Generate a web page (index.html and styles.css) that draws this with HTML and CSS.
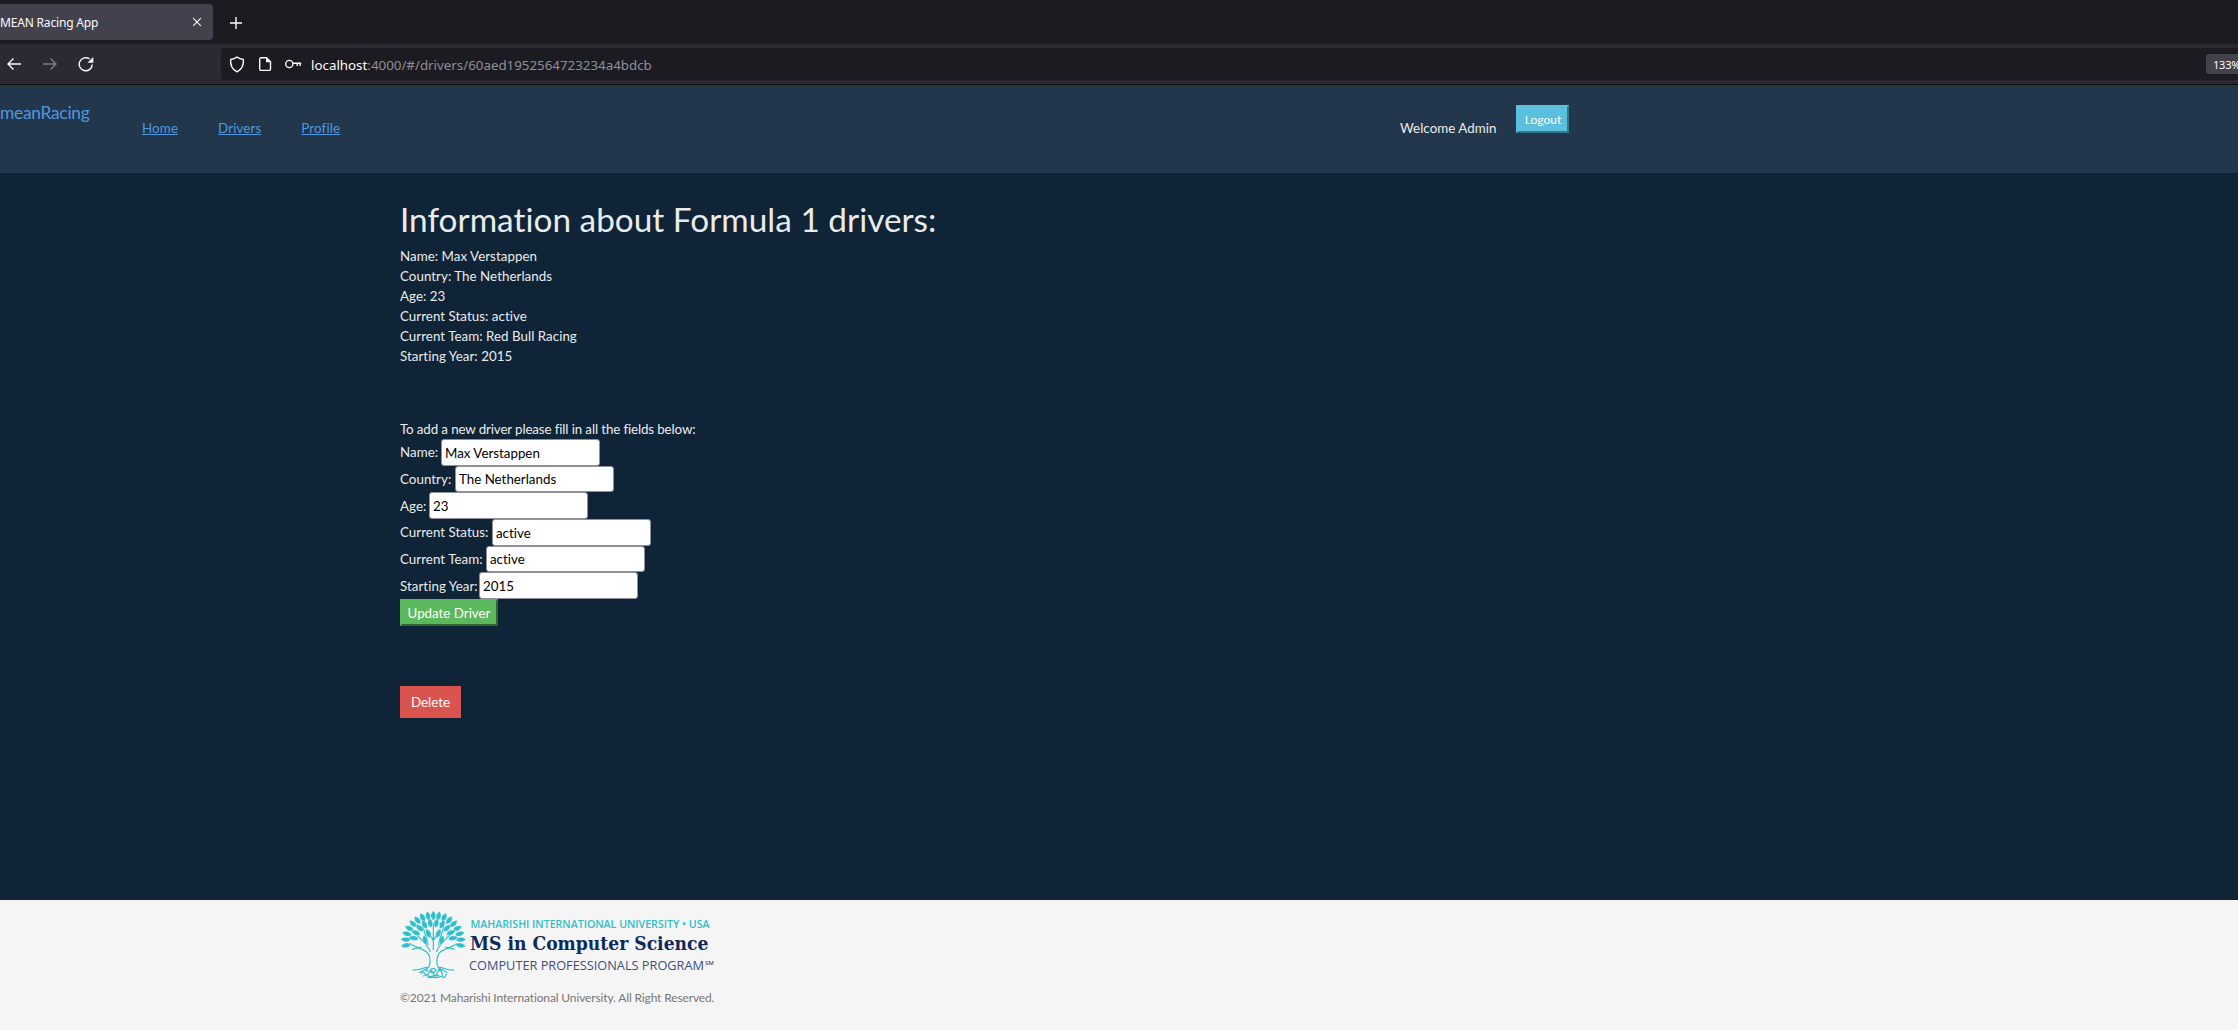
FILE: index.html
```html
<!DOCTYPE html>
<html lang="en">
<head>
<meta charset="utf-8">
<title>MEAN Racing App</title>
<link rel="stylesheet" href="styles.css">
</head>
<body>
<div class="tabs">
  <div class="tab">
    <span class="tab-title">MEAN Racing App</span>
    <svg class="tab-close" width="10" height="10" viewBox="0 0 10 10"><path d="M1.2 1.2l7.6 7.6M8.8 1.2L1.2 8.8"/></svg>
  </div>
  <svg class="tab-new" width="14" height="14" viewBox="0 0 14 14"><path d="M7 1v12M1 7h12"/></svg>
</div>
<div class="toolbar">
  <div class="nav-icons">
    <svg width="16" height="16" viewBox="0 0 16 16"><path d="M15 8H2M7.5 2.5L2 8l5.500 5.500"/></svg>
    <svg class="dim" width="16" height="16" viewBox="0 0 16 16"><path d="M1 8h13M8.500 2.500L14 8l-5.500 5.500"/></svg>
    <svg width="16" height="16" viewBox="0 0 16 16"><path d="M14.200 8.400A6.500 6.500 0 1 1 11.600 3"/><path class="solid" d="M15.300 1v5.800H9.500z"/></svg>
  </div>
  <div class="urlbar">
    <svg width="16" height="17" viewBox="0 0 16 17"><path d="M8 1.200c2 1.300 4 2 6.300 2.300.5 5-1.300 9.800-6.300 12.300C3 13.300 1.200 8.500 1.700 3.500 4 3.200 6 2.500 8 1.200z"/></svg>
    <svg width="14" height="16" viewBox="0 0 14 16"><path d="M8.500 1.800H3a1.300 1.300 0 0 0-1.300 1.300v10A1.300 1.300 0 0 0 3 14.400h8.200a1.300 1.300 0 0 0 1.300-1.300V5.800z"/><path class="solid" d="M8 1l5.200 5.200H8z"/></svg>
    <svg width="18" height="12" viewBox="0 0 18 12"><circle cx="4.300" cy="6" r="3.600"/><path d="M7.900 5.200h8.300M15.100 5.200V8M12.300 5.200V8"/></svg>
    <span class="url"><b>localhost</b>:4000/#/drivers/60aed1952564723234a4bdcb</span>
    <span class="zoom-level">133%</span>
  </div>
</div>
<header class="site-header">
  <a class="brand">meanRacing</a>
  <nav class="menu"><a>Home</a><a>Drivers</a><a>Profile</a></nav>
  <span class="welcome">Welcome Admin</span>
  <button class="logout">Logout</button>
</header>
<main class="content">
  <h1>Information about Formula 1 drivers:</h1>
  <div class="info">
    <div>Name: Max Verstappen</div>
    <div>Country: The Netherlands</div>
    <div>Age: 23</div>
    <div>Current Status: active</div>
    <div>Current Team: Red Bull Racing</div>
    <div>Starting Year: 2015</div>
  </div>
  <form class="driver-form">
    <div class="intro">To add a new driver please fill in all the fields below:</div>
    <label class="name">Name:<input value="Max Verstappen"></label>
    <label class="country">Country:<input value="The Netherlands"></label>
    <label class="age">Age:<input value="23"></label>
    <label class="status">Current Status:<input value="active"></label>
    <label class="team">Current Team:<input value="active"></label>
    <label class="year">Starting Year:<input value="2015"></label>
    <button class="update" type="button">Update Driver</button>
  </form>
  <button class="delete">Delete</button>
</main>
<footer class="site-footer">
  <svg class="logo" width="320" height="70" viewBox="0 0 320 70">
    <defs>
      <path id="leaf" d="M0 2C-10-7-9-17 0-27 9-17 10-7 0 2z"/>
    </defs>
    <g transform="scale(.3333) translate(-60 -57)">
      <g class="branches">
        <path d="M146 232C153 215 150 200 144 190 132 176 108 174 88 160M174 232C168 215 171 200 177 190 189 176 213 174 233 160"/>
        <path d="M160 180V100M160 152l-14-24M160 152l14-24M151 186C145 165 124 150 104 128M169 186C175 165 196 150 216 128M144 165C143 145 131 127 128 106M176 165C177 145 189 127 192 106M125 171L96 178M195 171l29 7"/>
      </g>
      <g class="leaves" transform="translate(160 154) scale(1.070 1)">
        <use href="#leaf" transform="rotate(-99) translate(0 -65)"/><use href="#leaf" transform="rotate(-86) translate(0 -65)"/><use href="#leaf" transform="rotate(-73) translate(0 -65)"/><use href="#leaf" transform="rotate(-60) translate(0 -65)"/><use href="#leaf" transform="rotate(-47) translate(0 -65)"/><use href="#leaf" transform="rotate(-35) translate(0 -65)"/><use href="#leaf" transform="rotate(-23) translate(0 -65)"/><use href="#leaf" transform="rotate(-11) translate(0 -65)"/><use href="#leaf" transform="rotate(0) translate(0 -65)"/><use href="#leaf" transform="rotate(11) translate(0 -65)"/><use href="#leaf" transform="rotate(23) translate(0 -65)"/><use href="#leaf" transform="rotate(35) translate(0 -65)"/><use href="#leaf" transform="rotate(47) translate(0 -65)"/><use href="#leaf" transform="rotate(60) translate(0 -65)"/><use href="#leaf" transform="rotate(73) translate(0 -65)"/><use href="#leaf" transform="rotate(86) translate(0 -65)"/><use href="#leaf" transform="rotate(99) translate(0 -65)"/>
        <use href="#leaf" transform="rotate(-80) translate(0 -44)"/><use href="#leaf" transform="rotate(-62) translate(0 -43)"/><use href="#leaf" transform="rotate(-44) translate(0 -43)"/><use href="#leaf" transform="rotate(-26) translate(0 -44)"/><use href="#leaf" transform="rotate(-9) translate(0 -43)"/><use href="#leaf" transform="rotate(9) translate(0 -43)"/><use href="#leaf" transform="rotate(26) translate(0 -44)"/><use href="#leaf" transform="rotate(44) translate(0 -43)"/><use href="#leaf" transform="rotate(62) translate(0 -43)"/><use href="#leaf" transform="rotate(80) translate(0 -44)"/>
        <use href="#leaf" transform="translate(-21 8) rotate(-12)"/><use href="#leaf" transform="translate(21 8) rotate(12)"/><use href="#leaf" transform="translate(-10 -12) rotate(-20)"/><use href="#leaf" transform="translate(10 -12) rotate(20)"/>
      </g>
      <path class="branches" d="M98 240c18 3 32-9 48-8M222 240c-18 3-32-9-48-8M146 232c-8 8-20 10-28 16M174 232c8 8 20 10 28 16M122 251q6-9 13 0t13-4 12 4 13-4 13 4 13 0M130 259q7-7 14-2t16 0 16 0 14 2M160 236c-7 0-14 6-8 10s16 0 16-4-4-6-8-6M136 243q7-5 8 2M184 243q-7-5-8 2M142 262h36"/>
    </g>
    <text class="university" x="70.500" y="19" textLength="239" lengthAdjust="spacingAndGlyphs">MAHARISHI INTERNATIONAL UNIVERSITY • USA</text>
    <text class="degree" x="70" y="41" textLength="238.500" lengthAdjust="spacingAndGlyphs">MS in Computer Science</text>
    <text class="program" x="69" y="61" textLength="235" lengthAdjust="spacingAndGlyphs">COMPUTER PROFESSIONALS PROGRAM</text>
    <text class="mark" x="305" y="56" textLength="9" lengthAdjust="spacingAndGlyphs">SM</text>
  </svg>
  <p class="copyright">©2021 Maharishi International University. All Right Reserved.</p>
</footer>
</body>
</html>
```
FILE: styles.css
```css
* { box-sizing: border-box; }
body {
  margin: 0;
  height: 1030px;
  overflow: hidden;
  display: flex;
  flex-direction: column;
  background: #0f2437;
  color: #ebebeb;
  font: 13.33px/20px Lato, sans-serif;
  font-variant-ligatures: no-common-ligatures;
}
svg { flex: none; fill: none; stroke: #fbfbfe; stroke-width: 1.4; }
svg .solid { fill: #fbfbfe; stroke: none; }
input, button { font: inherit; border-radius: 0; }

.tabs { height: 44px; flex: none; display: flex; background: #1c1b22; padding-top: 4px; }
.tab {
  width: 213px; height: 36px; display: flex; align-items: center; justify-content: space-between;
  padding-right: 11px; background: #42414d; border-radius: 0 4px 4px 0;
}
.tab-title { font: 12px/18px "Noto Sans", sans-serif; color: #fbfbfe; letter-spacing: -.18px; padding-top: 2px; }
.tab-close { stroke-width: 1.1; margin-top: -1px; }
.tab-new { margin: 12px 0 0 16px; }

.toolbar {
  height: 41px; flex: none; display: flex; align-items: center;
  background: #2b2a33; border-bottom: 1px solid #0c0c0d;
}
.nav-icons { width: 221px; display: flex; gap: 20px; padding-left: 6px; }
.dim { opacity: .4; }
.urlbar {
  flex: 1; height: 32px; display: flex; align-items: center;
  padding-left: 8px; background: #1c1b22; border-radius: 4px 0 0 4px;
}
.urlbar svg { margin-right: 13px; }
.urlbar svg:nth-of-type(3) { margin-right: 8px; }
.url { font: 13.33px/20px "Noto Sans", sans-serif; color: #8f8f96; margin-top: 2px; }
.url b { font-weight: 400; color: #fbfbfe; }
.zoom-level {
  margin-left: auto; width: 32px; height: 20px; padding-left: 7px; white-space: nowrap;
  background: #42414d; border-radius: 3px 0 0 3px; color: #fbfbfe;
  font: 11px/22px "Noto Sans", sans-serif; letter-spacing: -.2px;
}

.site-header { height: 88px; flex: none; display: flex; background: #22374b; }
.brand { width: 142px; padding-top: 17px; font-size: 17.33px; line-height: 22px; letter-spacing: -.25px; color: #4f97e0; }
.menu { display: flex; gap: 40px; width: 1258px; padding-top: 33px; letter-spacing: .13px; }
.menu a { color: #4f97e0; text-decoration: underline; }
.welcome { width: 116px; padding-top: 33px; letter-spacing: .04px; }
.logout {
  width: 53px; height: 28px; margin-top: 20px; padding: 2px 0 0 1px;
  background: #5bc0de; border: 2px outset #5bc0de; color: #fff; font-size: 12px;
}

.content { flex: 1; padding: 28px 0 0 400px; }
h1 { margin: 0 0 9px; font-size: 33.33px; line-height: 36px; font-weight: 400; letter-spacing: .02px; }
.info { letter-spacing: .04px; }
.intro { margin-top: 53px; letter-spacing: -.12px; }
.driver-form { display: flex; flex-direction: column; align-items: flex-start; }
.driver-form label { display: flex; align-items: center; height: 26.67px; letter-spacing: .04px; }
.driver-form input {
  width: 159px; height: 26.67px; margin-left: auto; padding: 1px 3px 0;
  background: #fff; color: #000; border: 1.33px solid #8f8f9d; border-radius: 3px;
}
.name { width: 200px; }
.country { width: 214px; }
.age { width: 188px; }
.status { width: 251px; }
.team { width: 245px; }
.year { width: 238px; }
.update {
  width: 98px; height: 27px; padding: 1px 0 0; white-space: nowrap;
  background: #5cb85c; border: 2px outset #5cb85c; color: #fff;
}
.delete {
  display: block; width: 61px; height: 32px; margin-top: 60px; padding: 0;
  background: #d9534f; border: 0; color: #fff;
}

.site-footer { height: 130px; flex: none; padding: 9px 0 0 400px; background: #f5f5f5; color: #777; }
.logo { display: block; overflow: visible; }
.logo text { stroke: none; }
.branches { stroke: #2fbfcc; stroke-width: 3.5; fill: none; }
.leaves { fill: #2fbfcc; stroke: #f5f5f5; stroke-width: 1.1; }
.university { fill: #2fbfcc; font: 600 10.2px "Open Sans", sans-serif; }
.degree { fill: #0e2a5c; font: bold 19px "DejaVu Serif Condensed", "DejaVu Serif", serif; }
.program { fill: #3d4f80; font: 12.6px "Open Sans", sans-serif; }
.mark { fill: #3d4f80; font: 600 6px "Open Sans", sans-serif; }
.copyright { margin: 9px 0 0; font-size: 12px; letter-spacing: -.14px; }
```
